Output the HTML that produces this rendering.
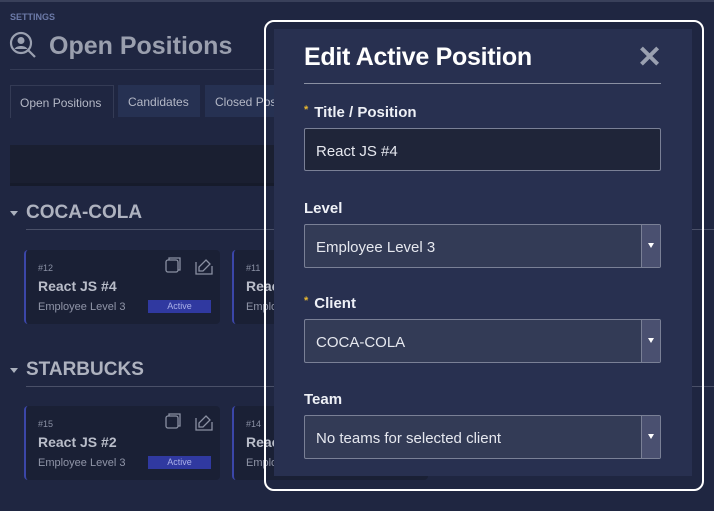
<!DOCTYPE html>
<html><head><style>
*{margin:0;padding:0;box-sizing:border-box}
body{width:714px;height:511px;background:#1f2641;font-family:"Liberation Sans",sans-serif;position:relative;overflow:hidden;color:#c8ccd8}
.a{position:absolute}
.card{position:absolute;width:196px;height:74px;background:#1a2035;border-left:2px solid #3b46a8;border-radius:4px}
.card .n{position:absolute;left:12px;top:13px;font-size:9px;color:#8a90a4}
.card .t{position:absolute;left:12px;top:28px;font-size:14px;color:#b9bdc9;font-weight:bold}
.card .l{position:absolute;left:12px;top:51px;font-size:11px;color:#9095a8}
.card .b{position:absolute;left:122px;top:50px;width:63px;height:13px;background:#3039a0;color:#aab0e8;font-size:9px;text-align:center;line-height:13px}
.lab{position:absolute;left:304px;font-size:15px;font-weight:bold;color:#eef0f6}
.lab s{text-decoration:none;color:#e8b830;font-size:11px;margin-right:6px;vertical-align:top}
.sel{position:absolute;left:304px;width:357px;height:44px;background:#333b56;border:1px solid #7a8096;border-radius:2px;font-size:15px;color:#e6e8ef;padding:14px 0 0 11px}
.sel i{position:absolute;right:0;top:0;width:19px;height:42px;background:#4a5070;border-left:1px solid #7a8096}
.sel i:after{content:"";position:absolute;left:6px;top:18px;border:3.5px solid transparent;border-top:5px solid #fff}
</style></head><body>
<div class="a" style="left:0;top:0;width:714px;height:2px;background:#39405a"></div>
<div class="a" style="left:10px;top:12px;font-size:9px;color:#6c7aa8;font-weight:bold">SETTINGS</div>
<svg class="a" style="left:9px;top:31px" width="28" height="28" viewBox="0 0 28 28" fill="none" stroke="#9aa0b0" stroke-width="2.2"><circle cx="12" cy="12" r="10"/><circle cx="12" cy="9.5" r="3.5" fill="#9aa0b0" stroke="none"/><path d="M5.5 18c2-4 11-4 13 0" fill="#9aa0b0" stroke="none"/><path d="M19 19l7 7"/></svg>
<div class="a" style="left:49px;top:32px;font-size:25px;font-weight:bold;color:#9a9fae">Open Positions</div>
<div class="a" style="left:10px;top:69px;width:270px;height:1px;background:#343b55"></div>
<div class="a" style="left:10px;top:85px;width:104px;height:33px;border:1px solid #343b55;border-bottom:none;font-size:12px;color:#b4b8c6;padding:10px 0 0 9px">Open Positions</div>
<div class="a" style="left:118px;top:85px;width:82px;height:32px;background:#263152;font-size:12px;color:#b4b8c6;padding:10px 0 0 10px">Candidates</div>
<div class="a" style="left:205px;top:85px;width:80px;height:32px;background:#263152;font-size:12px;color:#b4b8c6;padding:10px 0 0 10px">Closed Pos</div>
<div class="a" style="left:10px;top:145px;width:280px;height:38px;background:#1a1f31"></div>
<div class="a" style="left:10px;top:183px;width:280px;height:3px;background:#161b2b"></div>
<div class="a" style="left:10px;top:211px;border:4px solid transparent;border-top:5px solid #aab0bd"></div>
<div class="a" style="left:26px;top:202px;font-size:19px;color:#aeb2bf;font-weight:bold">COCA-COLA</div>
<div class="a" style="left:26px;top:229px;width:700px;height:1px;background:#4a5068"></div>
<div class="a" style="left:10px;top:368px;border:4px solid transparent;border-top:5px solid #aab0bd"></div>
<div class="a" style="left:26px;top:359px;font-size:19px;color:#aeb2bf;font-weight:bold">STARBUCKS</div>
<div class="a" style="left:26px;top:386px;width:700px;height:1px;background:#4a5068"></div>
<div class="card" style="left:24px;top:250px"><span class="n">#12</span><span class="t">React JS #4</span><span class="l">Employee Level 3</span><span class="b">Active</span>
<svg class="a" style="left:138px;top:6px" width="50" height="20" fill="none" stroke="#8a90a2" stroke-width="1.3"><rect x="2" y="4" width="12" height="12" rx="2"/><path d="M5 4V2h11v12h-2"/><path d="M32 6v12h16V10M42 4l4 4-7 7h-4v-4z"/></svg></div>
<div class="card" style="left:232px;top:250px"><span class="n">#11</span><span class="t">React</span><span class="l">Emplo</span></div>
<div class="card" style="left:24px;top:406px"><span class="n">#15</span><span class="t">React JS #2</span><span class="l">Employee Level 3</span><span class="b">Active</span>
<svg class="a" style="left:138px;top:6px" width="50" height="20" fill="none" stroke="#8a90a2" stroke-width="1.3"><rect x="2" y="4" width="12" height="12" rx="2"/><path d="M5 4V2h11v12h-2"/><path d="M32 6v12h16V10M42 4l4 4-7 7h-4v-4z"/></svg></div>
<div class="card" style="left:232px;top:406px"><span class="n">#14</span><span class="t">React</span><span class="l">Emplo</span></div>

<div class="a" style="left:264px;top:20px;width:440px;height:471px;border:2px solid #fff;border-radius:10px"></div>
<div class="a" style="left:274px;top:29px;width:418px;height:447px;background:#283050"></div>
<div class="a" style="left:304px;top:43px;font-size:25px;color:#fff;font-weight:bold;letter-spacing:-0.3px">Edit Active Position</div>
<div class="a" style="left:637px;top:44px;font-size:30px;color:#9aa0b0;font-weight:bold;line-height:28px">✕</div>
<div class="a" style="left:304px;top:83px;width:357px;height:1px;background:#8a90a2"></div>
<div class="lab" style="top:104px"><s>*</s>Title / Position</div>
<div class="sel" style="top:128px;background:#1f2539;height:43px">React JS #4</div>
<div class="lab" style="top:200px">Level</div>
<div class="sel" style="top:224px">Employee Level 3<i></i></div>
<div class="lab" style="top:295px"><s>*</s>Client</div>
<div class="sel" style="top:319px">COCA-COLA<i></i></div>
<div class="lab" style="top:391px">Team</div>
<div class="sel" style="top:415px">No teams for selected client<i></i></div>
</body></html>
